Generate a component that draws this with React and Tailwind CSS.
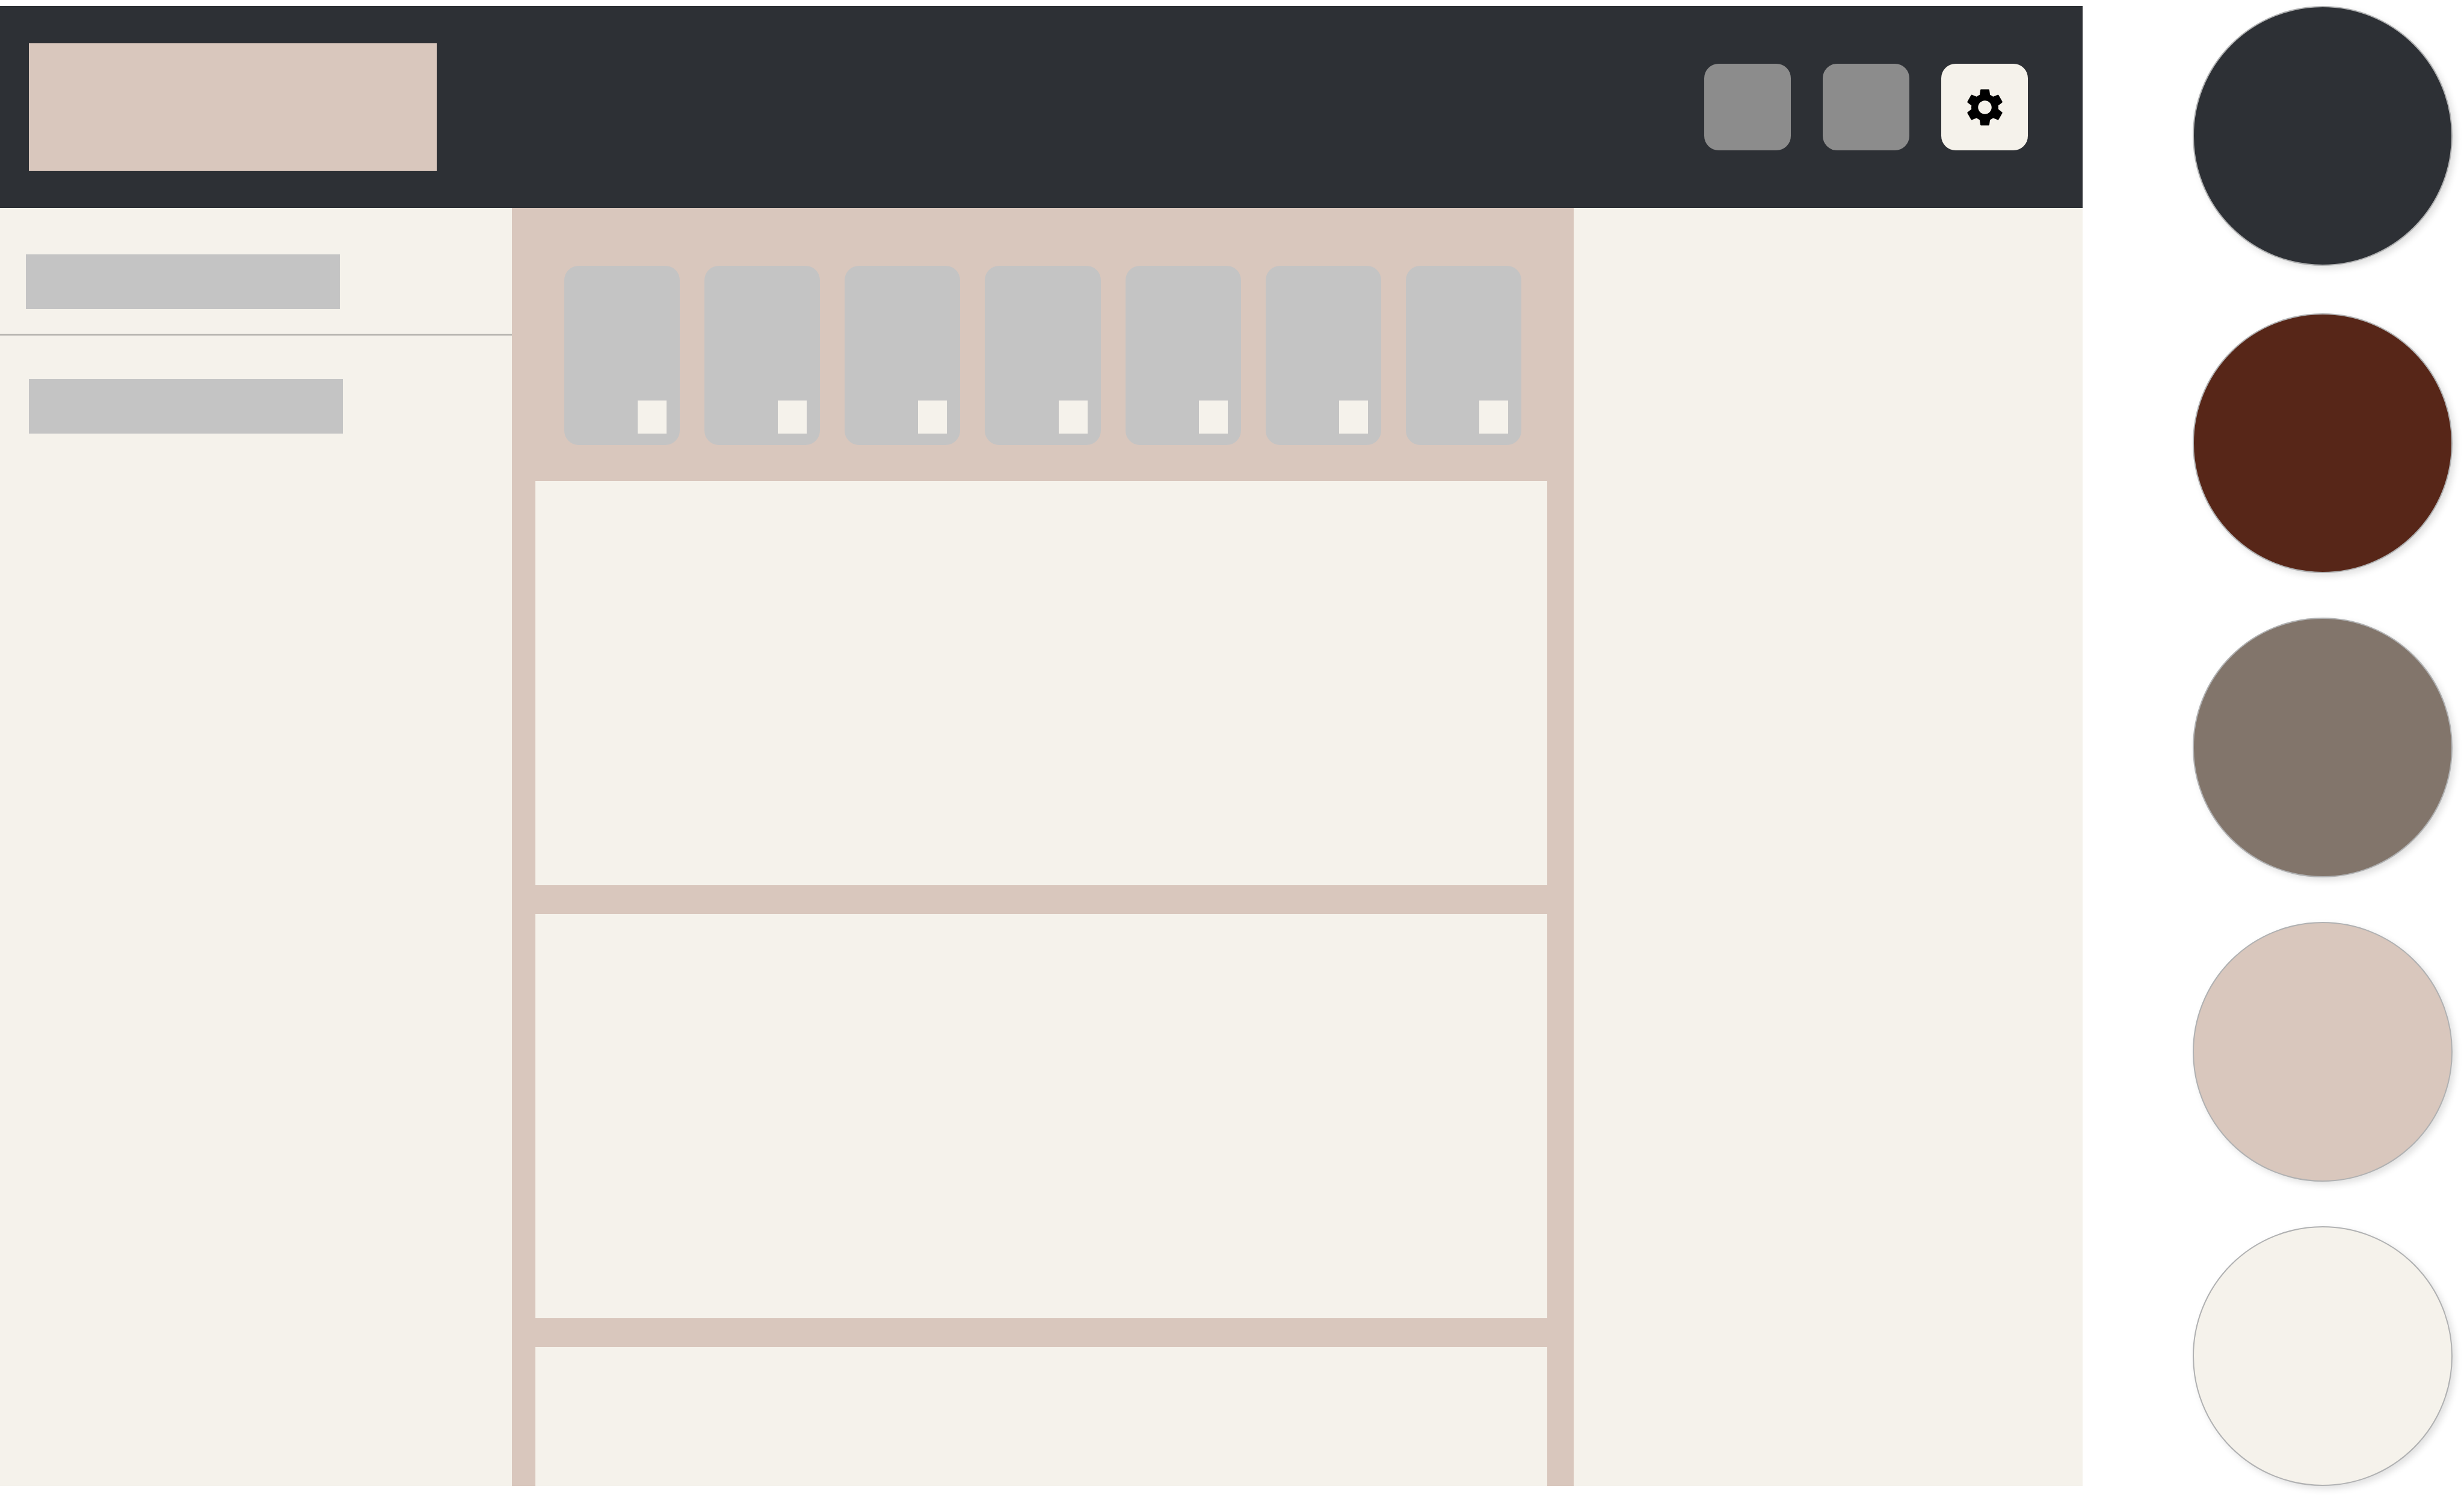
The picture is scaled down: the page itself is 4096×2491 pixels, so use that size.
import React from "react";
import { MdSettings } from "react-icons/md";

const palette = [
  { name: "Charcoal", color: "bg-[#2d3035]" },
  { name: "Mahogany", color: "bg-[#572618]" },
  { name: "Taupe", color: "bg-[#82756b]" },
  { name: "Blush", color: "bg-[#d9c7bd]" },
  { name: "Cream", color: "bg-[#f5f2eb]" },
];

const days = [1, 2, 3, 4, 5, 6, 7];

function Header() {
  return (
    <header className="flex h-[336px] shrink-0 items-center justify-between bg-[#2d3035] pl-12 pr-[91px]">
      <div className="h-[212px] w-[678px] bg-[#d9c7bd]" />
      <nav className="flex gap-[53px]">
        <button type="button" aria-label="Action one" className="size-36 rounded-3xl bg-[#8c8c8c]" />
        <button type="button" aria-label="Action two" className="size-36 rounded-3xl bg-[#8c8c8c]" />
        <button
          type="button"
          aria-label="Settings"
          className="flex size-36 items-center justify-center rounded-3xl bg-[#f5f2eb]"
        >
          <MdSettings className="size-[75px] text-black" />
        </button>
      </nav>
    </header>
  );
}

function Sidebar() {
  return (
    <aside className="w-[851px] shrink-0">
      <div className="border-b-3 border-[#b8b6b1] pb-[41px] pl-[43px] pt-[77px]">
        <div className="h-[91px] w-[522px] bg-[#c4c4c4]" />
      </div>
      <div className="pl-12 pt-[72px]">
        <div className="h-[91px] w-[522px] bg-[#c4c4c4]" />
      </div>
    </aside>
  );
}

function Card() {
  return (
    <li className="flex h-[298px] items-end justify-end rounded-3xl bg-[#c4c4c4] pb-[19px] pr-[22px]">
      <span className="h-[55px] w-12 bg-[#f5f2eb]" />
    </li>
  );
}

function Feed() {
  return (
    <main className="flex flex-1 flex-col bg-[#d9c7bd] pl-[39px] pr-11 pt-24">
      <ul className="ml-12 mr-[43px] grid grid-cols-7 gap-[41px]">
        {days.map((day) => (
          <Card key={day} />
        ))}
      </ul>
      <div className="mt-[60px] flex flex-1 flex-col gap-12">
        <section className="h-[672px] bg-[#f5f2eb]" />
        <section className="h-[672px] bg-[#f5f2eb]" />
        <section className="flex-1 bg-[#f5f2eb]" />
      </div>
    </main>
  );
}

function Palette() {
  return (
    <ul className="flex w-[634px] shrink-0 flex-col justify-between pl-[183px]">
      {palette.map((swatch) => (
        <li
          key={swatch.name}
          className={`size-[432px] rounded-full border-2 border-[#b0b1b2] shadow-[5px_5px_12px_rgba(0,0,0,0.12)] first:mb-[5px] ${swatch.color}`}
        />
      ))}
    </ul>
  );
}

export default function App() {
  return (
    <div className="flex min-h-screen bg-white pb-5 pt-[10px]">
      <div className="flex flex-1 flex-col bg-[#f5f2eb]">
        <Header />
        <div className="flex flex-1">
          <Sidebar />
          <Feed />
          <aside className="w-[846px] shrink-0" />
        </div>
      </div>
      <Palette />
    </div>
  );
}
